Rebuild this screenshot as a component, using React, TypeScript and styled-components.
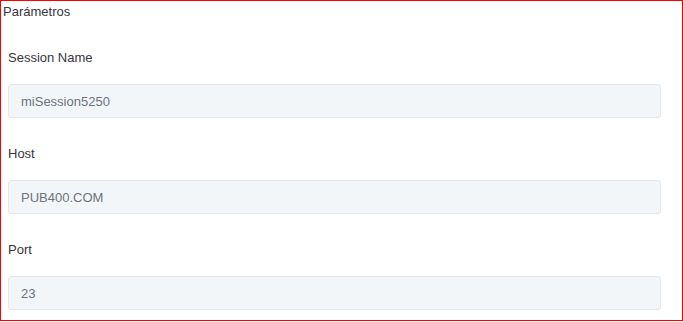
import React from 'react'
import styled, { createGlobalStyle } from 'styled-components'

const GlobalStyle = createGlobalStyle`
  html, body {
    margin: 0;
    padding: 0;
    background: #ffffff;
  }
  body {
    font-family: "Liberation Sans", Arial, sans-serif;
  }
`

const Panel = styled.fieldset`
  margin: 0;
  width: 683px;
  box-sizing: border-box;
  border: 1px solid #ff0000;
  padding: 2px 21px 10px 7px;
  min-width: 0;
`

const Title = styled.legend`
  display: block;
  float: left;
  width: 100%;
  margin: 0 0 1px -5px;
  padding: 0;
  font-size: 13px;
  line-height: 18px;
  color: #363640;
`

const Fields = styled.div`
  clear: both;
  display: flex;
  flex-direction: column;
`

const FieldGroup = styled.div`
  display: flex;
  flex-direction: column;
  padding-top: 27px;
`

const Label = styled.label`
  font-size: 13px;
  line-height: 18px;
  color: #363640;
  margin-bottom: 17px;
`

const Input = styled.input`
  box-sizing: border-box;
  width: 100%;
  height: 34px;
  margin: 0;
  padding: 0 12px;
  border: 1px solid #e3e7eb;
  border-radius: 3px;
  background: #f3f6f9;
  font-family: "Liberation Sans", Arial, sans-serif;
  font-size: 13px;
  color: #6c7480;
  outline: none;
`

interface Field {
  id: string
  label: string
  value: string
}

const fields: Field[] = [
  { id: 'sessionName', label: 'Session Name', value: 'miSession5250' },
  { id: 'host', label: 'Host', value: 'PUB400.COM' },
  { id: 'port', label: 'Port', value: '23' },
]

export default function App() {
  return (
    <>
      <GlobalStyle />
      <Panel>
        <Title>Parámetros</Title>
        <Fields>
          {fields.map((f) => (
            <FieldGroup key={f.id}>
              <Label htmlFor={f.id}>{f.label}</Label>
              <Input id={f.id} type="text" defaultValue={f.value} readOnly />
            </FieldGroup>
          ))}
        </Fields>
      </Panel>
    </>
  )
}
